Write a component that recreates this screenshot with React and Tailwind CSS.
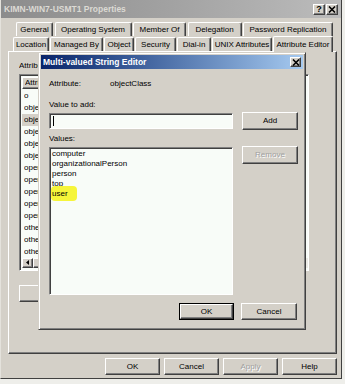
import React from "react";

const raised =
  "border border-t-white border-l-white border-r-[#404040] border-b-[#404040] shadow-[inset_-1px_-1px_0_#808080]";
const sunken =
  "border border-t-[#808080] border-l-[#808080] border-r-white border-b-white shadow-[inset_1px_1px_0_#404040]";

const row1 = [
  ["General", 37],
  ["Operating System", 77],
  ["Member Of", 53],
  ["Delegation", 54],
  ["Password Replication", 90],
];

const row2 = [
  ["Location", 36],
  ["Managed By", 53],
  ["Object", 30],
  ["Security", 41],
  ["Dial-in", 34],
  ["UNIX Attributes", 60],
];

// only the first letters show, the dialog covers the rest
const attributes = [
  "o",
  "objectCategory",
  "objectClass",
  "objectGUID",
  "objectSid",
  "objectVersion",
  "operatingSystem",
  "operatingSystemHotfix",
  "operatingSystemServicePack",
  "operatingSystemVersion",
  "operatorCount",
  "otherFacsimileTelephoneNumber",
  "otherHomePhone",
  "otherIpPhone",
];

const values = ["computer", "organizationalPerson", "person", "top", "user"];

const Tab = ({ label, width, selected }) => (
  <div
    style={{ width }}
    className={`flex items-center justify-center rounded-t-[2px] border-t border-l border-r border-t-white border-l-white border-r-[#404040] shadow-[inset_-1px_0_0_#808080] whitespace-nowrap ${
      selected ? "h-[16px] -mb-[1px] relative z-10 bg-[#d4d0c8]" : "h-[14px]"
    }`}
  >
    {label}
  </div>
);

const Button = ({ children, className = "", disabled, isDefault }) => (
  <div
    className={`flex items-center justify-center ${
      isDefault ? "border border-black" : ""
    } ${className}`}
  >
    <div
      className={`flex-1 h-full flex items-center justify-center ${raised} ${
        disabled ? "text-[#a0a0a0] [text-shadow:1px_1px_0_#fff]" : ""
      }`}
    >
      {children}
    </div>
  </div>
);

const CloseGlyph = () => (
  <svg width="8" height="7" viewBox="0 0 8 7">
    <path d="M1 0.5 L7 6.5 M7 0.5 L1 6.5" stroke="#000" strokeWidth="1.6" />
  </svg>
);

function PropertiesWindow() {
  return (
    <div className="w-[342px] h-[379px] flex flex-col bg-[#d4d0c8] border-l border-l-[#e4e2dc] border-r border-r-[#404040] border-b border-b-[#404040]">
      {/* title bar */}
      <div className="h-[19px] flex items-center justify-between pl-[3px] pr-[3px] bg-gradient-to-r from-[#8c8c8c] via-[#a2a2a2] to-[#bcbcbc] border-b border-[#d4d0c8]">
        <span className="font-bold text-[8.5px] text-[#dcdad4]">
          KIMN-WIN7-USMT1 Properties
        </span>
        <div className="flex gap-[1px]">
          <div className={`w-[12px] h-[11px] flex items-center justify-center bg-[#d4d0c8] font-bold text-[9px] ${raised}`}>
            ?
          </div>
          <div className={`w-[12px] h-[11px] flex items-center justify-center bg-[#d4d0c8] ${raised}`}>
            <CloseGlyph />
          </div>
        </div>
      </div>

      {/* tabs */}
      <div className="pt-[3px] flex flex-col">
        <div className="flex gap-[1.5px] pl-[15px]">
          {row1.map(([l, w]) => (
            <Tab key={l} label={l} width={w} />
          ))}
        </div>
        <div className="flex items-end gap-[1px] pl-[12px]">
          {row2.map(([l, w]) => (
            <Tab key={l} label={l} width={w} />
          ))}
          <Tab label="Attribute Editor" width={60} selected />
        </div>
      </div>

      {/* tab panel */}
      <div className="ml-[7px] w-[329px] h-[303px] border border-t-white border-l-white border-r-[#404040] border-b-[#404040] shadow-[inset_-1px_-1px_0_#808080] pl-[10px] pt-[6px] flex flex-col">
        <div className="h-[16px] w-[20px] overflow-hidden whitespace-nowrap flex items-center">
          Attributes:
        </div>
        <div className={`w-[290px] h-[197px] bg-[#f8fcf8] flex flex-col p-[2px] pr-0 ${sunken}`}>
          <div className={`h-[12px] w-[120px] flex items-center pl-[2px] bg-[#d4d0c8] ${raised}`}>
            <span className="w-[15px] overflow-hidden whitespace-nowrap">Attribute</span>
          </div>
          <div className="flex-1 flex flex-col pt-[1px]">
            {attributes.map((a, i) => (
              <div
                key={a}
                className={`h-[12px] flex items-center pl-[2px] w-[120px] ${
                  i === 2 ? "bg-[#d4d0c8]" : ""
                }`}
              >
                <span className="w-[15px] overflow-hidden whitespace-nowrap">{a}</span>
              </div>
            ))}
          </div>
          <div className="h-[11px] flex items-stretch bg-[#ecebe6]">
            <div className={`w-[11px] flex items-center justify-center bg-[#d4d0c8] ${raised}`}>
              <svg width="3" height="5" viewBox="0 0 3 5">
                <path d="M3 0 L0 2.5 L3 5 Z" fill="#000" />
              </svg>
            </div>
            <div className={`w-[60px] bg-[#d4d0c8] ${raised}`} />
          </div>
        </div>
        <Button className="mt-[14px] w-[75px] h-[17px]" />
      </div>

      {/* bottom buttons */}
      <div className="mt-[4px] flex justify-end gap-[4px] pr-[4px]">
        <Button className="w-[55px] h-[17px]">OK</Button>
        <Button className="w-[55px] h-[17px]">Cancel</Button>
        <Button className="w-[55px] h-[17px]" disabled>
          Apply
        </Button>
        <Button className="w-[55px] h-[17px]">Help</Button>
      </div>
    </div>
  );
}

function StringEditor() {
  return (
    <div className="absolute left-[38px] top-[52px] w-[268px] h-[278px] bg-[#d4d0c8] border border-t-[#d4d0c8] border-l-[#d4d0c8] border-r-[#404040] border-b-[#404040] shadow-[inset_1px_1px_0_#fff,inset_-1px_-1px_0_#808080] p-[2px] flex flex-col">
      <div className="h-[14px] flex items-center justify-between pl-[2px] pr-[2px] bg-gradient-to-r from-[#0a246a] to-[#a6caf0]">
        <span className="font-bold text-[8.5px] text-white">Multi-valued String Editor</span>
        <div className={`w-[11px] h-[10px] flex items-center justify-center bg-[#d4d0c8] ${raised}`}>
          <CloseGlyph />
        </div>
      </div>

      <div className="flex flex-col pl-[8px] pt-[9px]">
        <div className="h-[12px] flex items-center">
          <span className="w-[61px]">Attribute:</span>
          <span>objectClass</span>
        </div>
        <div className="h-[12px] mt-[9px] flex items-center">Value to add:</div>
        <div className="flex items-start gap-[9px] mt-[2px]">
          <div className={`w-[184px] h-[16px] bg-[#f8fcf8] flex items-center pl-[3px] ${sunken}`}>
            <div className="w-[1px] h-[10px] bg-black" />
          </div>
          <Button className="w-[56px] h-[18px] -mt-[1px]">Add</Button>
        </div>
        <div className="h-[12px] mt-[3px] flex items-center">Values:</div>
        <div className="flex items-start gap-[9px] mt-[2px]">
          <div className={`w-[184px] h-[148px] bg-[#f8fcf8] pl-[2px] pt-[1px] flex flex-col ${sunken}`}>
            {values.map((v) => (
              <div key={v} className="h-[10px] flex items-center relative">
                {v === "user" && (
                  <span className="absolute -left-[1px] top-[-3px] w-[26px] h-[15px] bg-[#f6f53a] rounded-[4px] blur-[0.6px]" />
                )}
                <span className="relative">{v}</span>
              </div>
            ))}
          </div>
          <Button className="w-[56px] h-[18px] -mt-[1px]" disabled>
            Remove
          </Button>
        </div>
        <div className="flex justify-end gap-[7px] mt-[8px] pr-[6px]">
          <Button className="w-[55px] h-[17px]" isDefault>
            OK
          </Button>
          <Button className="w-[56px] h-[17px]">Cancel</Button>
        </div>
      </div>
    </div>
  );
}

export default function App() {
  return (
    <div className="relative w-[345px] h-[384px] overflow-hidden bg-[#eeeeea] text-[8px] leading-none text-black font-['Liberation_Sans',Arial,sans-serif]">
      <PropertiesWindow />
      <StringEditor />
    </div>
  );
}
